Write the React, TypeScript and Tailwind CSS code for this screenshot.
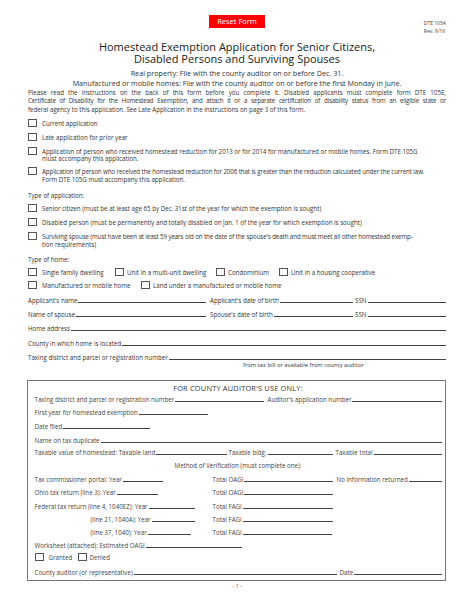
import React from "react";

function Chk({ className = "" }: { className?: string }) {
  return <span className={`block w-[9px] h-[8px] border border-[#555] shrink-0 bg-white ${className}`} />;
}

function CheckItem({ className = "", children }: { className?: string; children: React.ReactNode }) {
  return (
    <div className={`flex items-start ${className}`}>
      <Chk />
      <div className="ml-[5px] mt-[1px] text-[6.2px] leading-[7.5px] whitespace-nowrap">{children}</div>
    </div>
  );
}

function Ln({ className = "" }: { className?: string }) {
  return <span className={`flex-1 border-b border-[#444] ml-[1px] ${className}`} />;
}

export default function App() {
  return (
    <div className="w-[474px] h-[613px] bg-white text-[#333] font-['Open_Sans','Noto_Sans',sans-serif] overflow-hidden">
      {/* header */}
      <div className="grid grid-cols-[1fr_auto_1fr] h-[13px] mt-[15px]">
        <div />
        <div className="w-[56px] h-[13px] bg-[#ff0000] text-white text-[7.5px] flex items-center justify-center">
          Reset Form
        </div>
        <div className="flex justify-end pr-[28px] pt-[4px]">
          <div className="text-[5px] leading-[8px] text-[#444]">
            <div>DTE 105A</div>
            <div>Rev. 9/16</div>
          </div>
        </div>
      </div>

      <h1 className="mt-[13px] text-center text-[11px] leading-[12px] text-[#222] font-normal">
        Homestead Exemption Application for Senior Citizens,
        <br />
        Disabled Persons and Surviving Spouses
      </h1>

      <div className="mt-[3px] text-center text-[7.2px] leading-[10px] text-[#333]">
        <div>Real property: File with the county auditor on or before Dec. 31.</div>
        <div>Manufactured or mobile homes: File with the county auditor on or before the first Monday in June.</div>
      </div>

      <div className="px-[28px]">
        <div className="mt-[0.75px] text-[6.2px] leading-[8.5px]">
          <div className="whitespace-nowrap text-justify [text-align-last:justify]">
            Please read the instructions on the back of this form before you complete it. Disabled applicants must complete form DTE 105E,
          </div>
          <div className="whitespace-nowrap text-justify [text-align-last:justify] tracking-[-0.15px]">
            Certificate of Disability for the Homestead Exemption, and attach it or a separate certification of disability status from an eligible state or
          </div>
          <div className="whitespace-nowrap">
            federal agency to this application. See Late Application in the instructions on page 3 of this form.
          </div>
        </div>

        <CheckItem className="mt-[4.25px]">Current application</CheckItem>
        <CheckItem className="mt-[6px]">Late application for prior year</CheckItem>
        <CheckItem className="mt-[5px]">
          Application of person who received homestead reduction for 2013 or for 2014 for manufactured or mobile homes. Form DTE 105G
          <br />
          must accompany this application.
        </CheckItem>
        <CheckItem className="mt-[4.5px]">
          <span className="tracking-[-0.1px]">
            Application of person who received the homestead reduction for 2006 that is greater than the reduction calculated under the current law.
          </span>
          <br />
          Form DTE 105G must accompany this application.
        </CheckItem>

        <div className="mt-[8.5px] text-[6.2px] leading-[8px]">Type of application:</div>
        <CheckItem className="mt-[4.75px]">
          Senior citizen (must be at least age 65 by Dec. 31st of the year for which the exemption is sought)
        </CheckItem>
        <CheckItem className="mt-[5.5px]">
          Disabled person (must be permanently and totally disabled on Jan. 1 of the year for which exemption is sought)
        </CheckItem>
        <CheckItem className="mt-[5.5px]">
          <span className="tracking-[-0.1px]">
            Surviving spouse (must have been at least 59 years old on the date of the spouse&apos;s death and must meet all other homestead exemp-
          </span>
          <br />
          tion requirements)
        </CheckItem>

        <div className="mt-[7.75px] text-[6.2px] leading-[8px]">Type of home:</div>
        <div className="mt-[4.25px] flex items-start text-[6.2px] leading-[7.5px] whitespace-nowrap">
          <div className="flex items-start w-[87px]">
            <Chk />
            <span className="ml-[5px] mt-[1px]">Single family dwelling</span>
          </div>
          <div className="flex items-start w-[101px]">
            <Chk />
            <span className="ml-[3px] mt-[1px]">Unit in a multi-unit dwelling</span>
          </div>
          <div className="flex items-start w-[63px]">
            <Chk />
            <span className="ml-[3px] mt-[1px]">Condominium</span>
          </div>
          <div className="flex items-start">
            <Chk />
            <span className="ml-[3px] mt-[1px]">Unit in a housing cooperative</span>
          </div>
        </div>
        <div className="mt-[4.5px] flex items-start text-[6.2px] leading-[7.5px] whitespace-nowrap">
          <div className="flex items-start w-[113px]">
            <Chk />
            <span className="ml-[5px] mt-[1px]">Manufactured or mobile home</span>
          </div>
          <div className="flex items-start">
            <Chk />
            <span className="ml-[3px] mt-[1px]">Land under a manufactured or mobile home</span>
          </div>
        </div>

        <div className="mt-[7.25px] flex items-baseline h-[8px] leading-[8px] text-[6.2px] whitespace-nowrap">
          <div className="flex items-baseline w-[182px] pr-[4px]">
            <span>Applicant&apos;s name</span>
            <Ln />
          </div>
          <div className="flex items-baseline w-[145px] pr-[2px]">
            <span>Applicant&apos;s date of birth</span>
            <Ln />
          </div>
          <div className="flex items-baseline flex-1">
            <span>SSN</span>
            <Ln className="ml-[2px]" />
          </div>
        </div>
        <div className="mt-[6.2px] flex items-baseline h-[8px] leading-[8px] text-[6.2px] whitespace-nowrap">
          <div className="flex items-baseline w-[182px] pr-[4px]">
            <span>Name of spouse</span>
            <Ln />
          </div>
          <div className="flex items-baseline w-[145px] pr-[2px]">
            <span>Spouse&apos;s date of birth</span>
            <Ln />
          </div>
          <div className="flex items-baseline flex-1">
            <span>SSN</span>
            <Ln className="ml-[2px]" />
          </div>
        </div>
        <div className="mt-[6.2px] flex items-baseline h-[8px] leading-[8px] text-[6.2px] whitespace-nowrap">
          <span>Home address</span>
          <Ln />
        </div>
        <div className="mt-[6.2px] flex items-baseline h-[8px] leading-[8px] text-[6.2px] whitespace-nowrap">
          <span>County in which home is located</span>
          <Ln />
        </div>
        <div className="mt-[6.2px] flex items-baseline h-[8px] leading-[8px] text-[6.2px] whitespace-nowrap">
          <span>Taxing district and parcel or registration number</span>
          <Ln />
        </div>
        <div className="pl-[215px] text-[5.8px] leading-[6px] whitespace-nowrap">
          from tax bill or available from county auditor
        </div>
      </div>

      {/* auditor box */}
      <div className="ml-[27px] mr-[28px] mt-[12.7px] border-[1.5px] border-[#777] pl-[6.5px] pr-[3.5px] pt-[3px] pb-[3.2px] text-[6.2px] text-[#444] whitespace-nowrap">
        <div className="text-center text-[7.4px] leading-[9px] tracking-[0.2px] text-[#333]">
          FOR COUNTY AUDITOR&apos;S USE ONLY:
        </div>
        <div className="mt-[2.5px] flex items-baseline h-[8px] leading-[8px]">
          <div className="flex items-baseline w-[233px] pr-[4px]">
            <span>Taxing district and parcel or registration number</span>
            <Ln />
          </div>
          <div className="flex items-baseline flex-1">
            <span>Auditor&apos;s application number</span>
            <Ln />
          </div>
        </div>
        <div className="mt-[5.3px] flex items-baseline h-[8px] leading-[8px]">
          <div className="flex items-baseline w-[173px]">
            <span>First year for homestead exemption</span>
            <Ln />
          </div>
        </div>
        <div className="mt-[5.4px] flex items-baseline h-[8px] leading-[8px]">
          <div className="flex items-baseline w-[115px]">
            <span>Date filed</span>
            <Ln />
          </div>
        </div>
        <div className="mt-[6px] flex items-baseline h-[8px] leading-[8px]">
          <span>Name on tax duplicate</span>
          <Ln />
        </div>
        <div className="mt-[4.6px] flex items-baseline h-[8px] leading-[8px]">
          <div className="flex items-baseline w-[194px] pr-[2px]">
            <span>Taxable value of homestead: Taxable land</span>
            <Ln />
          </div>
          <div className="flex items-baseline w-[107px] pr-[3px]">
            <span>Taxable bldg.</span>
            <Ln />
          </div>
          <div className="flex items-baseline flex-1">
            <span>Taxable total</span>
            <Ln />
          </div>
        </div>
        <div className="mt-[4.4px] text-center h-[8px] leading-[8px]">Method of Verification (must complete one):</div>

        <div className="mt-[6.3px] grid grid-cols-[178px_124px_1fr] items-baseline h-[8px] leading-[8px]">
          <div className="flex items-baseline w-[128px]">
            <span>Tax commissioner portal: Year</span>
            <Ln />
          </div>
          <div className="flex items-baseline w-[120px]">
            <span>Total OAGI</span>
            <Ln />
          </div>
          <div className="flex items-baseline">
            <span>No information returned</span>
            <Ln />
          </div>
        </div>
        <div className="mt-[5.3px] grid grid-cols-[178px_124px_1fr] items-baseline h-[8px] leading-[8px]">
          <div className="flex items-baseline w-[123px]">
            <span>Ohio tax return (line 3): Year</span>
            <Ln />
          </div>
          <div className="flex items-baseline w-[120px]">
            <span>Total OAGI</span>
            <Ln />
          </div>
          <div />
        </div>
        <div className="mt-[5.4px] grid grid-cols-[178px_124px_1fr] items-baseline h-[8px] leading-[8px]">
          <div className="flex items-baseline w-[160px]">
            <span>Federal tax return (line 4, 1040EZ): Year</span>
            <Ln />
          </div>
          <div className="flex items-baseline w-[120px]">
            <span>Total FAGI</span>
            <Ln />
          </div>
          <div />
        </div>
        <div className="mt-[5.3px] grid grid-cols-[178px_124px_1fr] items-baseline h-[8px] leading-[8px]">
          <div className="flex items-baseline w-[160px] pl-[56px]">
            <span>(line 21, 1040A): Year</span>
            <Ln />
          </div>
          <div className="flex items-baseline w-[120px]">
            <span>Total FAGI</span>
            <Ln />
          </div>
          <div />
        </div>
        <div className="mt-[5.3px] grid grid-cols-[178px_124px_1fr] items-baseline h-[8px] leading-[8px]">
          <div className="flex items-baseline w-[156px] pl-[56px]">
            <span>(line 37, 1040): Year</span>
            <Ln />
          </div>
          <div className="flex items-baseline w-[119px]">
            <span>Total FAGI</span>
            <Ln />
          </div>
          <div />
        </div>
        <div className="mt-[4.4px] flex items-baseline h-[8px] leading-[8px]">
          <div className="flex items-baseline w-[207px]">
            <span>Worksheet (attached): Estimated OAGI</span>
            <Ln />
          </div>
        </div>
        <div className="mt-[3.8px] flex items-start h-[9px] leading-[7.5px]">
          <div className="flex items-start w-[43px]">
            <Chk />
            <span className="ml-[5px] mt-[1px]">Granted</span>
          </div>
          <div className="flex items-start">
            <Chk />
            <span className="ml-[3px] mt-[1px]">Denied</span>
          </div>
        </div>
        <div className="mt-[6.8px] flex items-baseline h-[8px] leading-[8px]">
          <div className="flex items-baseline w-[305px] pr-[3px]">
            <span>County auditor (or representative)</span>
            <Ln />
          </div>
          <div className="flex items-baseline flex-1">
            <span>Date</span>
            <Ln />
          </div>
        </div>
      </div>
      <div className="mt-[1px] text-center text-[5.5px] leading-[8px] text-[#555]">- 1 -</div>
    </div>
  );
}
